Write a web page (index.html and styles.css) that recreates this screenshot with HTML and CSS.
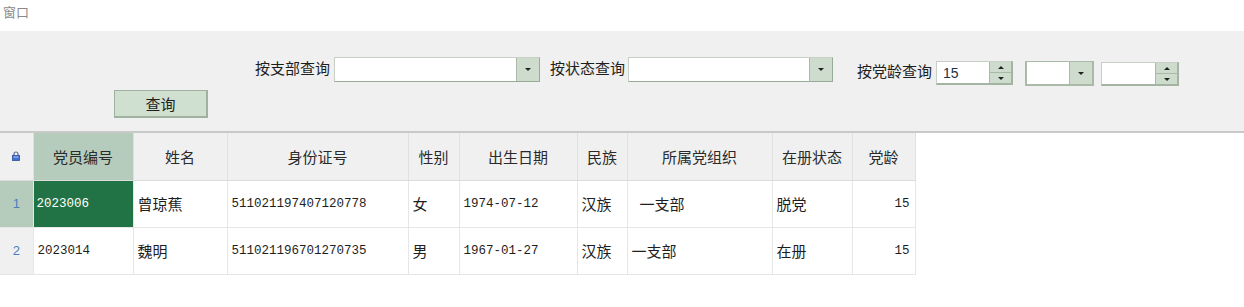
FILE: index.html
```html
<!DOCTYPE html>
<html lang="zh-CN">
<head>
    <meta charset="utf-8">
    <title>窗口</title>
    <link rel="stylesheet" href="styles.css">
</head>
<body>
    <div class="title">窗口</div>

    <div class="panel">
        <div class="filters">
            <label class="label">按支部查询</label>
            <div class="combo wide">
                <div class="combo-text"></div>
                <div class="combo-btn"><span class="arrow-down"></span></div>
            </div>
            <label class="label gap-l">按状态查询</label>
            <div class="combo wide2">
                <div class="combo-text"></div>
                <div class="combo-btn"><span class="arrow-down"></span></div>
            </div>
            <div class="age-group">
                <label class="label">按党龄查询</label>
                <div class="spin">
                    <div class="spin-text">15</div>
                    <div class="spin-btns">
                        <div class="spin-btn"><span class="arrow-up"></span></div>
                        <div class="spin-btn"><span class="arrow-down"></span></div>
                    </div>
                </div>
                <div class="combo small">
                    <div class="combo-text"></div>
                    <div class="combo-btn"><span class="arrow-down"></span></div>
                </div>
                <div class="spin spin2">
                    <div class="spin-text"></div>
                    <div class="spin-btns">
                        <div class="spin-btn"><span class="arrow-up"></span></div>
                        <div class="spin-btn"><span class="arrow-down"></span></div>
                    </div>
                </div>
            </div>
        </div>
        <div class="actions">
            <button class="query-button">查询</button>
        </div>
    </div>

    <table class="grid">
        <colgroup>
            <col style="width:33px">
            <col style="width:100px">
            <col style="width:94px">
            <col style="width:181px">
            <col style="width:51px">
            <col style="width:118px">
            <col style="width:50px">
            <col style="width:145px">
            <col style="width:80px">
            <col style="width:63px">
        </colgroup>
        <thead>
            <tr>
                <th class="corner">
                    <svg width="8" height="10" viewBox="0 0 8 10">
                        <path d="M2 4.5V3a2 2 0 0 1 4 0v1.5" fill="none" stroke="#5b6f9a" stroke-width="1.2"/>
                        <rect x="0.5" y="4.5" width="7" height="5" fill="#3f6fd0" stroke="#2c4f9c" stroke-width="0.8"/>
                        <rect x="1.5" y="5.5" width="5" height="1.2" fill="#9dbbf2"/>
                    </svg>
                </th>
                <th class="sel-col">党员编号</th>
                <th>姓名</th>
                <th>身份证号</th>
                <th>性别</th>
                <th>出生日期</th>
                <th>民族</th>
                <th>所属党组织</th>
                <th>在册状态</th>
                <th>党龄</th>
            </tr>
        </thead>
        <tbody>
            <tr>
                <td class="row-head sel-row">1</td>
                <td class="num selected">2023006</td>
                <td>曾琼蕉</td>
                <td class="num">511021197407120778</td>
                <td>女</td>
                <td class="num">1974-07-12</td>
                <td>汉族</td>
                <td class="indent">一支部</td>
                <td>脱党</td>
                <td class="num right">15</td>
            </tr>
            <tr>
                <td class="row-head">2</td>
                <td class="num">2023014</td>
                <td>魏明</td>
                <td class="num">511021196701270735</td>
                <td>男</td>
                <td class="num">1967-01-27</td>
                <td>汉族</td>
                <td>一支部</td>
                <td>在册</td>
                <td class="num right">15</td>
            </tr>
        </tbody>
    </table>
</body>
</html>
```

FILE: styles.css
```css
* {
    box-sizing: border-box;
    margin: 0;
    padding: 0;
}
body {
    background-color: #ffffff;
    color: #1e1e1e;
    font-family: "Noto Sans CJK SC", "Noto Sans", sans-serif;
    font-size: 15px;
}
.title {
    height: 31px;
    padding: 2px 0 0 3px;
    font-size: 13px;
    color: #8a8a8a;
}
.panel {
    background-color: #f0f0f0;
    height: 102px;
    border-bottom: 2px solid #c9c9c9;
    padding-top: 26px;
}
.filters {
    display: flex;
    align-items: flex-start;
    padding-left: 255px;
    height: 33px;
}
.label {
    line-height: 22px;
    margin-right: 4px;
    white-space: nowrap;
}
.gap-l {
    margin-left: 10px;
    margin-right: 3px;
}
.combo {
    display: flex;
    height: 25px;
    background-color: #ffffff;
    border: 1px solid #c7cfc7;
    border-bottom-color: #98ab98;
    border-right-color: #98ab98;
}
.combo.wide {
    width: 206px;
}
.combo.wide2 {
    width: 205px;
}
.combo.small {
    width: 69px;
    margin-left: 12px;
    border: 2px solid #a9baa9;
    border-top-width: 1px;
}
.combo-text {
    flex: 1;
}
.combo-btn {
    width: 23px;
    background-color: #cddccd;
    border-left: 1px solid #a9baa9;
    display: flex;
    align-items: center;
    justify-content: center;
}
.arrow-down {
    width: 0;
    height: 0;
    border-left: 3px solid transparent;
    border-right: 3px solid transparent;
    border-top: 3px solid #222;
}
.arrow-up {
    width: 0;
    height: 0;
    border-left: 3px solid transparent;
    border-right: 3px solid transparent;
    border-bottom: 3px solid #222;
}
.age-group {
    display: flex;
    align-items: flex-start;
    margin-left: 24px;
    margin-top: 4px;
}
.age-group .label {
    line-height: 20px;
}
.spin {
    display: flex;
    width: 77px;
    height: 24px;
    background-color: #ffffff;
    border: 1px solid #c7cfc7;
    border-bottom: 2px solid #a3b4a3;
    border-right: 2px solid #a3b4a3;
}
.spin2 {
    width: 78px;
    margin-left: 7px;
    margin-top: 1px;
}
.spin-text {
    flex: 1;
    padding-left: 6px;
    font-family: "Liberation Sans", sans-serif;
    font-size: 14px;
    line-height: 22px;
    color: #23304a;
}
.spin-btns {
    width: 22px;
    display: flex;
    flex-direction: column;
    border-left: 1px solid #a9baa9;
}
.spin-btn {
    flex: 1;
    background-color: #cddccd;
    display: flex;
    align-items: center;
    justify-content: center;
}
.spin-btn + .spin-btn {
    border-top: 1px solid #a9baa9;
}
.actions {
    padding-left: 114px;
}
.query-button {
    width: 94px;
    height: 28px;
    background-color: #cfdfd0;
    border: 1px solid #9fb29f;
    border-right-width: 2px;
    border-bottom-width: 2px;
    font-family: "Noto Sans CJK SC", sans-serif;
    font-size: 15px;
    color: #1e1e1e;
}
.grid {
    border-collapse: collapse;
    table-layout: fixed;
    width: 915px;
}
.grid th {
    height: 47px;
    background-color: #f0f0f0;
    font-weight: normal;
    text-align: center;
    border-right: 1px solid #e0e0e0;
    border-bottom: 1px solid #dcdcdc;
    color: #2a2a2a;
}
.grid th.sel-col {
    background-color: #b5ccbc;
}
.grid td {
    height: 47px;
    border-right: 1px solid #e6e6e6;
    border-bottom: 1px solid #e6e6e6;
    padding-left: 4px;
    white-space: nowrap;
}
.grid .corner svg {
    display: block;
    margin: 0 auto;
}
.grid td.row-head {
    background-color: #f0f0f0;
    text-align: center;
    padding-left: 0;
    color: #4a7fc0;
    font-family: "Liberation Sans", sans-serif;
    font-size: 13px;
}
.grid td.row-head.sel-row {
    background-color: #b5ccbc;
}
.grid td.num {
    font-family: "Liberation Mono", "DejaVu Sans Mono", monospace;
    font-size: 12.5px;
}
.grid td.selected {
    background-color: #217346;
    color: #ffffff;
    padding-left: 3px;
}
.grid td.right {
    text-align: right;
    padding-right: 5px;
}
.grid td.indent {
    padding-left: 12px;
}
```
